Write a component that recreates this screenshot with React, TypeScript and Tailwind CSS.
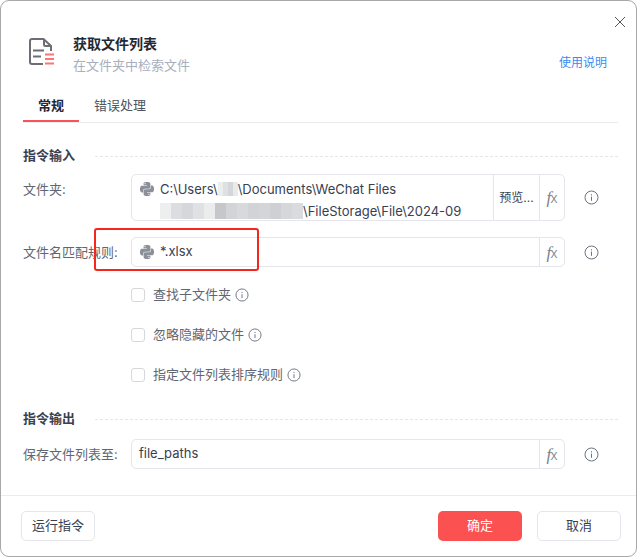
import { SiPython } from "react-icons/si";

const font = { fontFamily: "Inter, 'Noto Sans CJK SC', sans-serif" };

const mosaicTop = ["#eceded", "#dfe0e2", "#d5d6d9", "#e9eaeb"];
const mosaicBottom = [
  "#eeeeef", "#dcdde0", "#d6d7da", "#e0e1e3", "#ececed", "#c6c7cb", "#d3d4d7", "#d8d9dc",
  "#d2d3d6", "#d4d5d8", "#cfd0d4", "#d6d7da", "#dadbde",
];

function Info({ small }: { small?: boolean }) {
  const s = small ? 14 : 15;
  return (
    <svg width={s} height={s} viewBox="0 0 15 15" fill="none" stroke="#6b7280" strokeWidth="1" className="shrink-0">
      <circle cx="7.5" cy="7.5" r="6.5" />
      <path d="M7.5 6.6v4.2" />
      <path d="M7.5 4.2v1.2" />
    </svg>
  );
}

function Fx() {
  return (
    <div className="w-[25px] shrink-0 border-l border-[#e5e6eb] flex items-center justify-center text-[#7c818b]">
      <span className="text-[17px] leading-none italic font-['Liberation_Serif',serif]">f</span>
      <span className="text-[14px] leading-none font-light -ml-[1px] mt-[1px]">x</span>
    </div>
  );
}

function InfoCell() {
  return (
    <div className="w-[53px] shrink-0 flex items-center justify-center">
      <Info />
    </div>
  );
}

function Py() {
  return <SiPython size={14} color="#8a8f98" className="shrink-0" />;
}

function Section({ title }: { title: string }) {
  return (
    <div className="flex items-center h-[20px]">
      <span className="w-[72px] shrink-0 text-[13px] font-bold text-[#374151]">{title}</span>
      <div className="flex-1 border-t border-dashed border-[#e5e6eb]" />
    </div>
  );
}

function Check({ label }: { label: string }) {
  return (
    <div className="h-[40px] flex items-center pl-[108px]">
      <div className="w-[14px] h-[14px] rounded-[3px] border border-[#d5d7dc] bg-white" />
      <span className="ml-[8px] mr-[4px] text-[13px] text-[#5f6672]">{label}</span>
      <Info small />
    </div>
  );
}

export default function App() {
  return (
    <div className="relative w-[642px] h-[558px] bg-white overflow-hidden" style={font}>
      <div className="w-[637px] h-[557px] bg-white border border-[#a8a8a8] rounded-[9px] flex flex-col">
        <div className="flex-1 pl-[22px] pr-[18px] flex flex-col">
          <div className="h-[16px] flex justify-end -mr-[8px] pt-[15px]">
            <svg width="12" height="12" viewBox="0 0 12 12" fill="none" stroke="#555" strokeWidth="1" className="shrink-0">
              <path d="M1 1l10 10M11 1L1 11" />
            </svg>
          </div>
          <div className="flex items-start h-[62px] pt-[15px] pl-[4px]">
            <svg width="30" height="30" viewBox="0 0 30 30" fill="none" className="shrink-0 mt-[4px]">
              <path
                d="M16 28H5a2 2 0 0 1-2-2V5a2 2 0 0 1 2-2h11.5L24 10v5"
                stroke="#6d6e75"
                strokeWidth="2"
              />
              <path d="M17 3v5.5a1.5 1.5 0 0 0 1.5 1.5H24" stroke="#6d6e75" strokeWidth="2" />
              <path d="M6 14.5h11M6 20.5h8" stroke="#6d6e75" strokeWidth="2" />
              <path d="M18 18.5h9M18 23h9M18 27.5h9" stroke="#fb7575" strokeWidth="1.8" />
            </svg>
            <div className="ml-[16px] mt-[2px]">
              <div className="text-[14px] leading-[20px] font-bold text-[#1f2937]">获取文件列表</div>
              <div className="text-[13px] leading-[20px] mt-[1px] text-[#a8aebb]">在文件夹中检索文件</div>
            </div>
            <a className="ml-auto mr-[11px] mt-[21px] text-[12px] leading-[20px] text-[#3b8bf0]">使用说明</a>
          </div>
          <div className="flex h-[30px] border-b border-[#ebecef] mt-[14px] text-[13px]">
            <div className="w-[56px] h-[29px] pt-[2px] text-center font-bold text-[#1f2937] leading-[20px] border-b-2 border-[#f9525a]">
              常规
            </div>
            <div className="ml-[15px] pt-[2px] leading-[20px] text-[#4b5563]">错误处理</div>
          </div>

          <div className="mt-[23px]">
            <Section title="指令输入" />
          </div>

          <div className="mt-[8px] flex h-[47px]">
            <div className="w-[108px] shrink-0 pt-[5px] text-[13px] leading-[20px] text-[#5f6672]">文件夹:</div>
            <div className="flex-1 flex border border-[#e5e6eb] rounded-[5px]">
              <div className="flex-1 flex pl-[8px] pt-[3px]">
                <div className="pt-[4px]"><Py /></div>
                <div className="ml-[6px] text-[13px] leading-[22px] text-[#374151] whitespace-nowrap">
                  <div className="flex items-center">
                    C:\Users\
                    <span className="flex h-[14px]">
                      {mosaicTop.map((c, i) => (
                        <span key={i} className="w-[5px] h-full" style={{ backgroundColor: c }} />
                      ))}
                    </span>
                    \Documents\WeChat Files
                  </div>
                  <div className="flex items-center">
                    <span className="flex h-[16px]">
                      {mosaicBottom.map((c, i) => (
                        <span key={i} className="w-[11px] h-full" style={{ backgroundColor: c }} />
                      ))}
                    </span>
                    \FileStorage\File\2024-09
                  </div>
                </div>
              </div>
              <div className="w-[46px] shrink-0 border-l border-[#e5e6eb] flex items-center justify-center text-[12px] text-[#374151]">
                预览...
              </div>
              <Fx />
            </div>
            <InfoCell />
          </div>

          <div className="mt-[16px] flex h-[30px]">
            <div className="w-[108px] shrink-0 text-[13px] leading-[30px] text-[#5f6672]">文件名匹配规则:</div>
            <div className="flex-1 flex border border-[#e5e6eb] rounded-[5px]">
              <div className="flex-1 flex items-center pl-[8px]">
                <Py />
                <span className="ml-[6px] text-[13px] text-[#374151]">*.xlsx</span>
              </div>
              <Fx />
            </div>
            <InfoCell />
          </div>

          <div className="mt-[8px]">
            <Check label="查找子文件夹" />
            <Check label="忽略隐藏的文件" />
            <Check label="指定文件列表排序规则" />
          </div>

          <div className="mt-[14px]">
            <Section title="指令输出" />
          </div>

          <div className="mt-[10px] flex h-[30px]">
            <div className="w-[108px] shrink-0 text-[13px] leading-[30px] text-[#5f6672]">保存文件列表至:</div>
            <div className="flex-1 flex border border-[#e5e6eb] rounded-[5px]">
              <div className="flex-1 flex items-center pl-[7px] text-[13px] text-[#374151]">file_paths</div>
              <Fx />
            </div>
            <InfoCell />
          </div>
        </div>

        <div className="h-[61px] shrink-0 border-t border-[#ebecef] flex items-center px-[20px] pr-[15px]">
          <button className="w-[74px] h-[30px] border border-[#e5e6eb] rounded-[5px] text-[13px] text-[#374151]">运行指令</button>
          <button className="ml-auto w-[84px] h-[30px] rounded-[5px] bg-[#fb5151] text-white text-[13px]">确定</button>
          <button className="ml-[15px] w-[84px] h-[30px] border border-[#e5e6eb] rounded-[5px] text-[13px] text-[#374151]">取消</button>
        </div>
      </div>

      <div className="absolute left-[94px] top-[228px] w-[165px] h-[43px] border-[2px] border-[#f5261c] rounded-[3px]" />
    </div>
  );
}
